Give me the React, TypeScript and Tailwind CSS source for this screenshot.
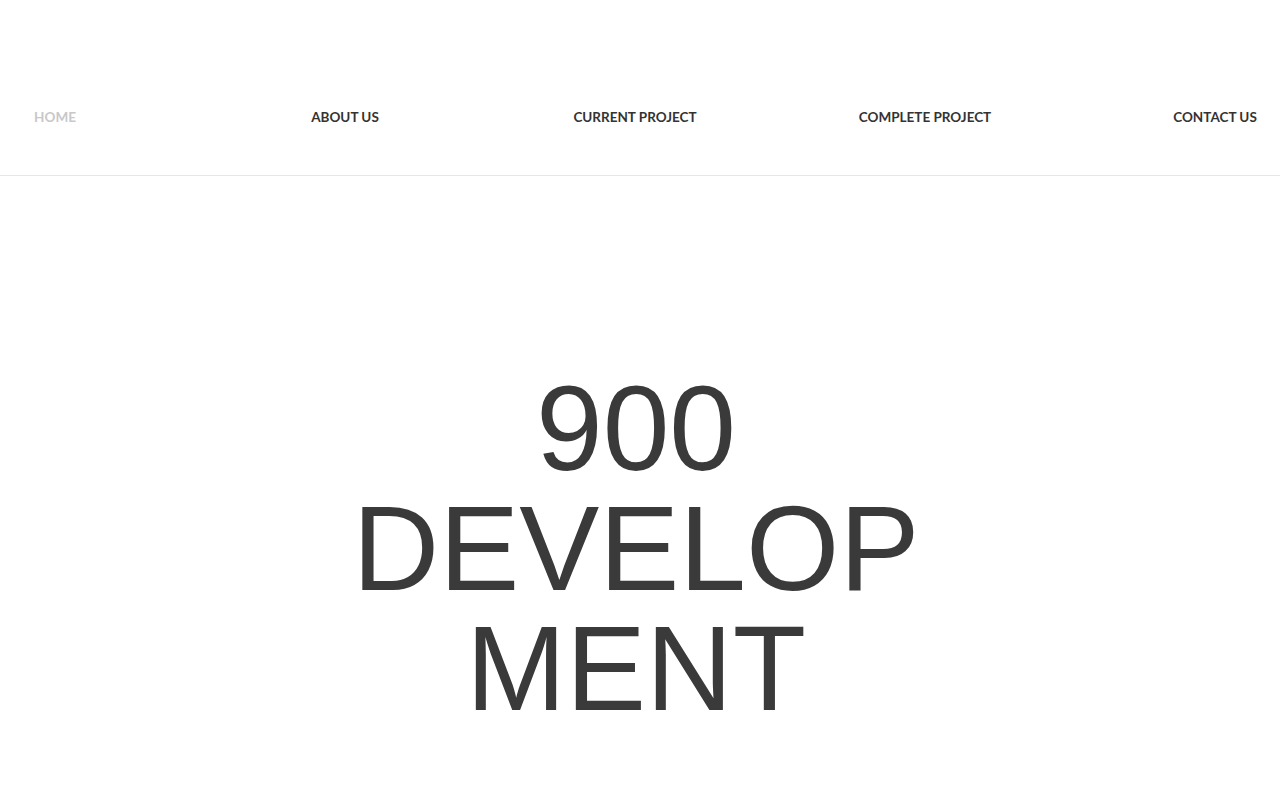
export default function App() {
  const items = ["HOME", "ABOUT US", "CURRENT PROJECT", "COMPLETE PROJECT", "CONTACT US"];
  return (
    <div className="min-h-[800px] w-full bg-white">
      <header className="h-[176px] border-b border-[#e6e6e6] flex items-center pt-[60px]">
        <nav className="flex gap-[180px]">
          {items.map((t, i) => (
            <div key={t} className="w-[110px] min-w-0 shrink-0 flex justify-center">
              <a
                className={`block whitespace-nowrap text-[13.5px] font-bold leading-none [font-family:'Lato','Open_Sans',sans-serif] ${
                  i === 0 ? "text-[#c8c8c8]" : "text-[#333333]"
                }`}
              >
                {t}
              </a>
            </div>
          ))}
        </nav>
      </header>
      <main className="flex justify-center pt-[192px] pr-2">
        <h1 className="w-[600px] text-center text-[120px] leading-[120px] text-[#3a3a3a] [font-family:'Liberation_Sans',Arial,sans-serif] [overflow-wrap:anywhere]">
          900 DEVELOPMENT
        </h1>
      </main>
    </div>
  );
}
